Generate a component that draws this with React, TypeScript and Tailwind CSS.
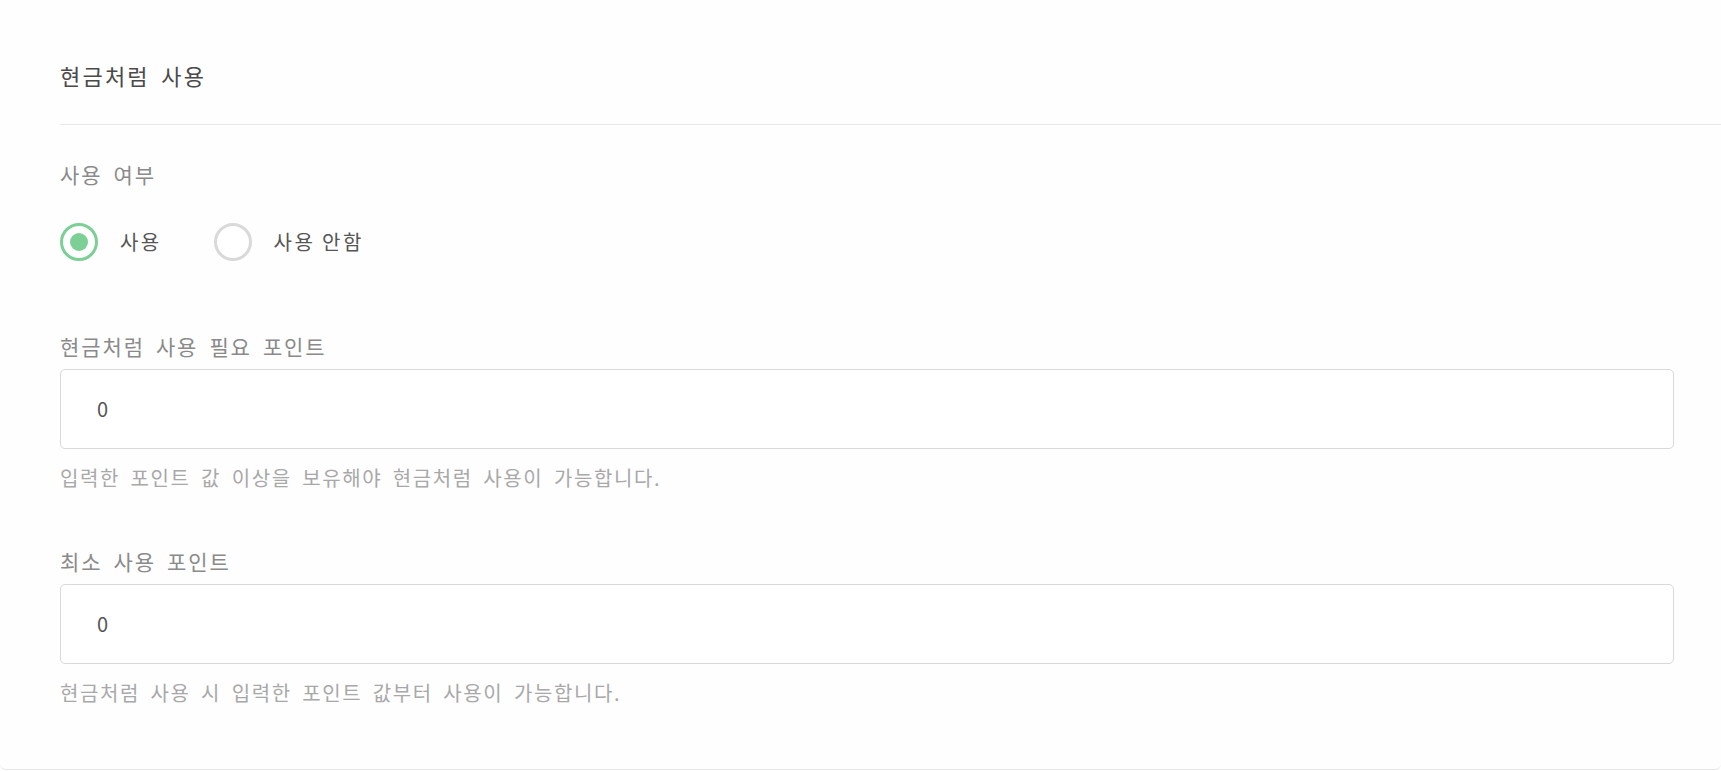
import React, { useState } from 'react';

const font = { fontFamily: '"Noto Sans CJK KR", "Noto Sans", sans-serif' };

function Radio({ checked, label, onClick }: { checked: boolean; label: string; onClick: () => void }) {
  return (
    <button type="button" onClick={onClick} className="flex items-center gap-[22px]">
      <span
        className={
          checked
            ? 'flex h-[38px] w-[38px] items-center justify-center rounded-full border-[3px] border-[#7ccf95] bg-white'
            : 'flex h-[38px] w-[38px] items-center justify-center rounded-full border-[3px] border-[#d9d9d9] bg-white'
        }
      >
        {checked && <span className="h-[18px] w-[18px] rounded-full bg-[#7ccf95]" />}
      </span>
      <span className="text-[20px] leading-[30px] tracking-[0.12em] text-[#555]">{label}</span>
    </button>
  );
}

function PointField({ label, help }: { label: string; help: string }) {
  return (
    <div>
      <div className="text-[21px] leading-[30px] tracking-[0.09em] text-[#8a8a8a]">{label}</div>
      <div className="mt-[8px] flex h-[80px] items-center rounded-[5px] border border-[#d9d9d9] bg-white pl-[36px]">
        <span className="text-[20px] text-[#555]">0</span>
      </div>
      <div className="mt-[14px] text-[20px] leading-[30px] tracking-[0.08em] text-[#a8a8a8]">{help}</div>
    </div>
  );
}

export default function App() {
  const [use, setUse] = useState(true);

  return (
    <div className="h-[771px] w-full bg-white [word-spacing:0.28em]" style={font}>
      <div className="h-[770px] rounded-b-[6px] border-b border-[#e6e6e6] bg-[#fefefe] pl-[60px]">
        {/* header */}
        <div className="h-[125px] border-b border-[#e8e8e8] pt-[58px]">
          <h2 className="text-[22px] leading-[34px] tracking-[0.1em] text-[#4a4a4a]">현금처럼 사용</h2>
        </div>

        <div className="pr-[47px]">
          {/* 사용 여부 */}
          <div className="pt-[34px] text-[21px] leading-[30px] tracking-[0.09em] text-[#8a8a8a]">사용 여부</div>
          <div className="mt-[34px] flex items-center gap-[52px]">
            <Radio checked={use} label="사용" onClick={() => setUse(true)} />
            <Radio checked={!use} label="사용 안함" onClick={() => setUse(false)} />
          </div>

          <div className="mt-[70px]">
            <PointField
              label="현금처럼 사용 필요 포인트"
              help="입력한 포인트 값 이상을 보유해야 현금처럼 사용이 가능합니다."
            />
          </div>

          <div className="mt-[53px]">
            <PointField
              label="최소 사용 포인트"
              help="현금처럼 사용 시 입력한 포인트 값부터 사용이 가능합니다."
            />
          </div>
        </div>
      </div>
    </div>
  );
}
